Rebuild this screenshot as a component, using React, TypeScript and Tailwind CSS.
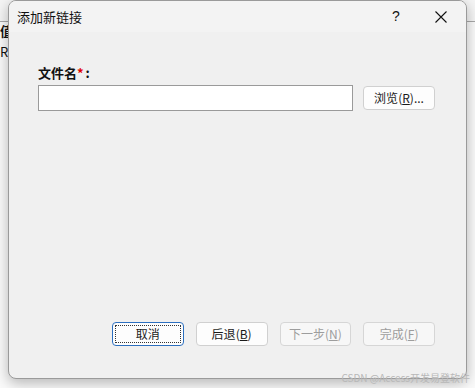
import React from "react";

const font = { fontFamily: '"Microsoft YaHei", "Noto Sans CJK SC", "Liberation Sans", sans-serif' };

function Btn({ label, hot, rest, disabled, focused }: { label: string; hot: string; rest: string; disabled?: boolean; focused?: boolean }) {
  return (
    <button
      type="button"
      className={`w-[72px] h-[24px] rounded-[4px] text-[12px] flex items-center justify-center ${
        focused
          ? "border border-[#2c6fbf] bg-[#fdfdfd] text-[#1a1a1a]"
          : disabled
          ? "border border-[#d6d6d6] bg-[#f7f7f7] text-[#9d9d9d]"
          : "border border-[#d0d0d0] bg-[#fdfdfd] text-[#1a1a1a]"
      }`}
    >
      <span className={focused ? "w-[66px] h-[18px] flex items-center justify-center border border-dotted border-[#333]" : ""}>
        {label}
        {hot && (
          <>
            (<span className="underline">{hot}</span>){rest}
          </>
        )}
      </span>
    </button>
  );
}

export default function App() {
  return (
    <div className="relative w-[475px] h-[388px] overflow-hidden bg-[#fafafa]" style={font}>
      {/* window behind */}
      <div className="absolute left-0 top-0 w-[475px] h-[22px] border-b border-[#a8a8a8] bg-[#f5f5f5]" />
      <div className="absolute left-0 top-[24px] text-[13px] font-bold text-[#111] leading-none">值</div>
      <div className="absolute left-0 top-[45px] text-[13px] text-[#111] leading-none">R</div>

      {/* dialog */}
      <div className="absolute left-[8px] top-0 w-[459px] h-[379px] rounded-[8px] border border-[#9a9a9a] bg-[#f0f0f0] shadow-[0_4px_14px_rgba(0,0,0,0.28)] flex flex-col overflow-hidden">
        <div className="h-[31px] bg-[#f3f3f3] flex items-center pl-[8px]">
          <span className="text-[13px] text-[#111]">添加新链接</span>
          <span className="ml-auto w-[40px] text-center text-[14px] text-[#111]" style={{ fontFamily: '"Liberation Sans", sans-serif' }}>?</span>
          <span className="w-[50px] flex justify-center">
            <svg width="12" height="12" viewBox="0 0 12 12">
              <path d="M0.5 0.5 L11.5 11.5 M11.5 0.5 L0.5 11.5" stroke="#111" strokeWidth="1.1" />
            </svg>
          </span>
        </div>
        <div className="flex-1 flex flex-col pl-[29px] pr-[31px]">
          <div className="mt-[34px] text-[13px] font-bold text-[#111] leading-none">
            文件名<span className="text-[#e00000]">*</span><span className="ml-[2px]">:</span>
          </div>
          <div className="mt-[6px] flex items-center">
            <div className="w-[315px] h-[26px] bg-white border border-[#9a9a9a]" />
            <div className="ml-[10px]">
              <Btn label="浏览" hot="R" rest="..." />
            </div>
          </div>
          <div className="mt-auto mb-[32px] flex gap-[12px] pl-[74px]">
            <Btn label="取消" hot="" rest="" focused />
            <Btn label="后退" hot="B" rest="" />
            <Btn label="下一步" hot="N" rest="" disabled />
            <Btn label="完成" hot="F" rest="" disabled />
          </div>
        </div>
      </div>
      <div className="absolute right-[5px] bottom-[5px] text-[10px] text-[#b8b8b8] leading-none">CSDN @Access开发易登软件</div>
    </div>
  );
}
